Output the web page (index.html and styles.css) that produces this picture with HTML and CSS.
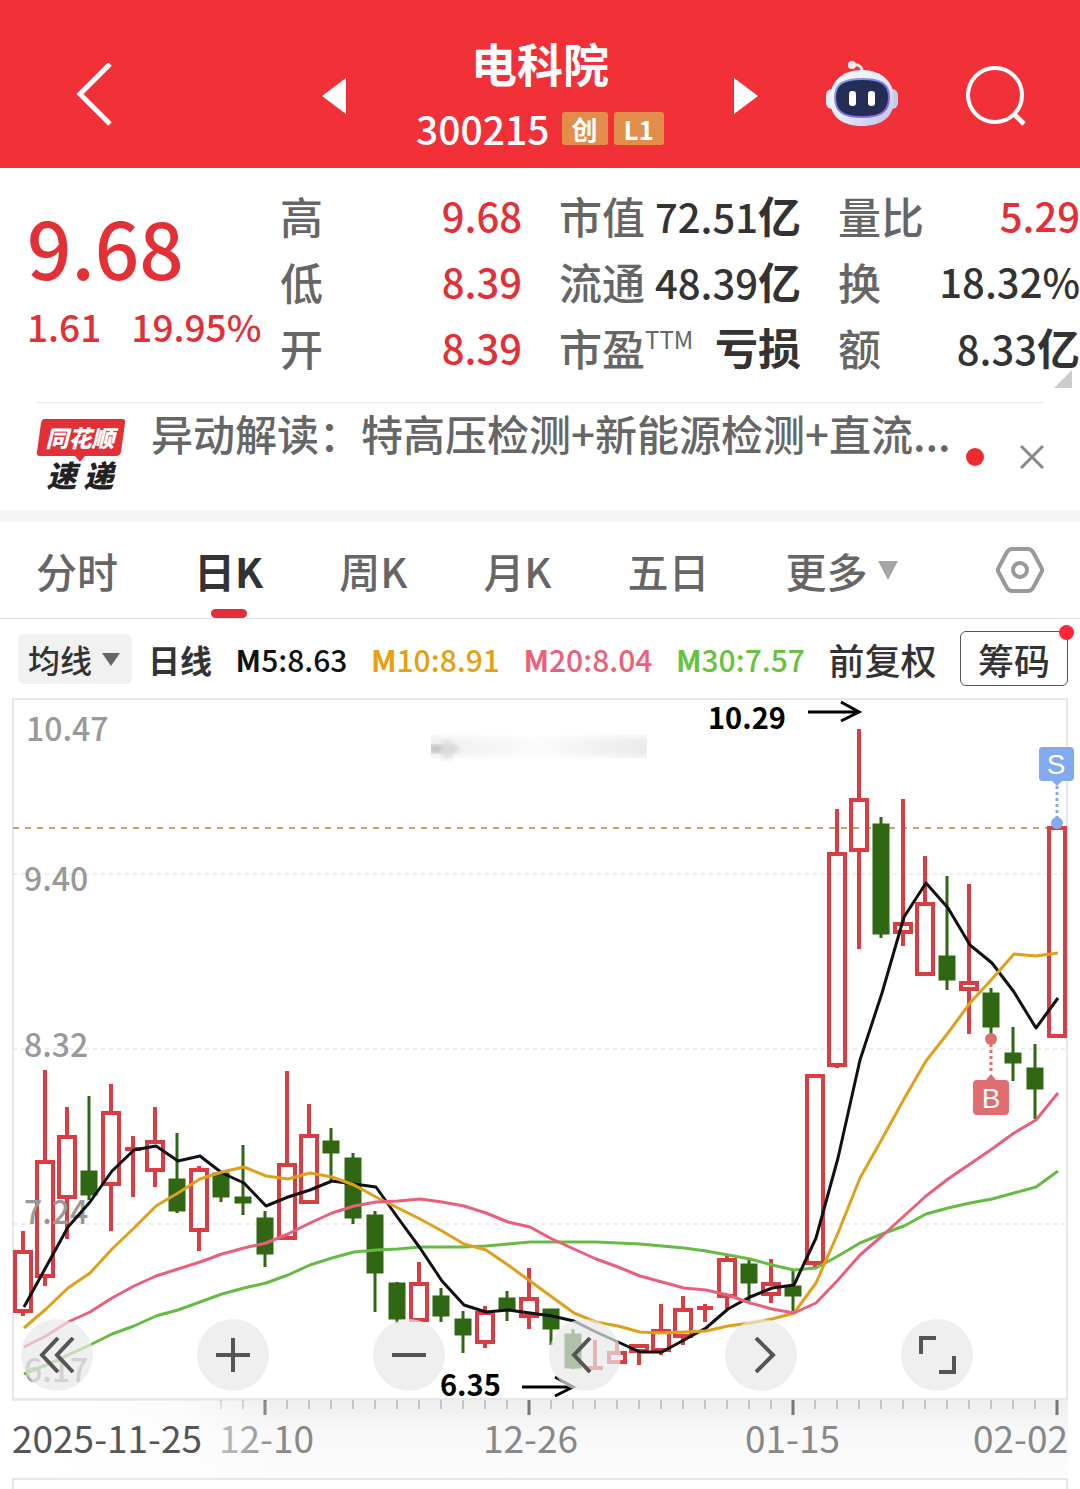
FILE: index.html
```
<!DOCTYPE html>
<html lang="zh-CN">
<head>
    <meta charset="UTF-8">
    <meta name="viewport" content="width=device-width, initial-scale=1.0">
    <title>电科院 300215</title>
    <link rel="stylesheet" href="styles.css">
</head>
<body>
    <header class="header">
        <div class="header-left">
            <button class="icon-button" aria-label="返回">
                <svg width="40" height="66" viewBox="0 0 40 66"><path d="M35 1 L5 31 L35 61" fill="none" stroke="#fff" stroke-width="5"/></svg>
            </button>
            <button class="icon-button" aria-label="上一只">
                <svg width="24" height="36" viewBox="0 0 24 36"><path d="M24 0 V36 L0 18 Z" fill="#fff"/></svg>
            </button>
        </div>
        <div class="header-title">
            <h1>电科院</h1>
            <div class="code-row">
                <span class="code">300215</span>
                <span class="tag">创</span>
                <span class="tag">L1</span>
            </div>
        </div>
        <div class="header-right">
            <button class="icon-button" aria-label="下一只">
                <svg width="24" height="36" viewBox="0 0 24 36"><path d="M0 0 V36 L24 18 Z" fill="#fff"/></svg>
            </button>
            <button class="icon-button robot" aria-label="智能助手">
                <svg width="72" height="72" viewBox="0 0 72 72">
                    <defs>
                        <linearGradient id="shell" x1="0" y1="0" x2="1" y2="1">
                            <stop offset="0" stop-color="#fff"/>
                            <stop offset="0.5" stop-color="#e9ebf8"/>
                            <stop offset="1" stop-color="#b9c0ee"/>
                        </linearGradient>
                        <linearGradient id="rim" x1="0" y1="0" x2="1" y2="1">
                            <stop offset="0" stop-color="#8fa6e8"/>
                            <stop offset="0.7" stop-color="#7d6ae6"/>
                            <stop offset="1" stop-color="#a15be8"/>
                        </linearGradient>
                    </defs>
                    <path d="M36 14 C37 7 33 4 27 5" fill="none" stroke="#f1e6f2" stroke-width="3"/>
                    <circle cx="26" cy="5" r="4" fill="#f7eef5"/>
                    <rect x="0" y="29" width="12" height="20" rx="6" fill="#e6e9fa"/>
                    <rect x="60" y="29" width="12" height="20" rx="6" fill="#c3c9f2"/>
                    <path d="M36 10 C56 10 68 22 68 39 C68 57 56 66 36 66 C16 66 4 57 4 39 C4 22 16 10 36 10 Z" fill="url(#shell)"/>
                    <path d="M36 19 C55 19 63 24 63 37 C63 51 56 57 36 57 C16 57 9 51 9 37 C9 24 17 19 36 19 Z" fill="#242d55" stroke="url(#rim)" stroke-width="2"/>
                    <rect x="23" y="31" width="7" height="15" rx="3" fill="#fff"/>
                    <rect x="42" y="31" width="7" height="15" rx="3" fill="#fff"/>
                </svg>
            </button>
            <button class="icon-button" aria-label="搜索">
                <svg width="60" height="62" viewBox="0 0 60 62"><g fill="none" stroke="#fff" stroke-width="4"><circle cx="29" cy="30" r="27"/><path d="M48 49 L58 59" stroke-width="5"/></g></svg>
            </button>
        </div>
    </header>

    <section class="quote">
        <div class="price-box">
            <div class="price">9.68</div>
            <div class="change"><span>1.61</span><span>19.95%</span></div>
        </div>
        <dl class="stats">
            <div><dt>高</dt><dd class="up">9.68</dd></div>
            <div><dt>市值</dt><dd>72.51<b>亿</b></dd></div>
            <div><dt>量比</dt><dd class="up">5.29</dd></div>
            <div><dt>低</dt><dd class="up">8.39</dd></div>
            <div><dt>流通</dt><dd>48.39<b>亿</b></dd></div>
            <div><dt>换</dt><dd>18.32%</dd></div>
            <div><dt>开</dt><dd class="up">8.39</dd></div>
            <div><dt>市盈<sup>TTM</sup></dt><dd><b>亏损</b></dd></div>
            <div><dt>额</dt><dd>8.33<b>亿</b></dd></div>
        </dl>
        <span class="corner"></span>
    </section>

    <section class="news">
        <svg class="news-logo" width="90" height="80" viewBox="0 0 90 80">
            <path d="M8 2 H86 Q90 2 89 6 L85 35 Q84 39 80 39 H49 L44 45 L39 39 H4 Q0 39 1 35 L5 6 Q6 2 8 2 Z" fill="#e33037"/>
            <text x="44" y="30" class="logo-top">同花顺</text>
            <text x="44" y="70" class="logo-bottom">速 递</text>
        </svg>
        <a class="news-text" href="#">异动解读：特高压检测+新能源检测+直流...</a>
        <span class="red-dot"></span>
        <button class="icon-button" aria-label="关闭">
            <svg width="24" height="24" viewBox="0 0 24 24"><path d="M1 1 L23 23 M23 1 L1 23" stroke="#888" stroke-width="3"/></svg>
        </button>
    </section>

    <nav class="tabs">
        <button>分时</button>
        <button class="active">日K</button>
        <button>周K</button>
        <button>月K</button>
        <button>五日</button>
        <button class="more">更多<svg width="22" height="19" viewBox="0 0 22 19"><path d="M1 0 H21 L11 19 Z" fill="#a5a5a5"/></svg></button>
        <button class="settings" aria-label="设置">
            <svg width="48" height="46" viewBox="0 0 48 46"><g fill="none" stroke="#999" stroke-width="4"><path d="M16 2 H32 Q35 2 37 5 L45 20 Q47 23 45 26 L37 41 Q35 44 32 44 H16 Q13 44 11 41 L3 26 Q1 23 3 20 L11 5 Q13 2 16 2 Z"/><circle cx="24" cy="23" r="7"/></g></svg>
        </button>
    </nav>

    <div class="ma-row">
        <div class="ma-period">
            <div class="ma-select">
                <select aria-label="指标"><option>均线</option></select>
                <svg width="18" height="13" viewBox="0 0 18 13"><path d="M0 0 H18 L9 13 Z" fill="#666"/></svg>
            </div>
            <strong>日线</strong>
        </div>
        <span class="ma m5"><b>M</b>5:8.63</span>
        <span class="ma m10"><b>M</b>10:8.91</span>
        <span class="ma m20"><b>M</b>20:8.04</span>
        <span class="ma m30"><b>M</b>30:7.57</span>
        <button class="adjust">前复权</button>
        <button class="chips">筹码<span class="chips-dot"></span></button>
    </div>

    <main class="chart">
        <svg id="kline" viewBox="0 698 1080 780">
            <defs>
                <linearGradient id="axisShade" x1="0" y1="0" x2="0" y2="1">
                    <stop offset="0" stop-color="#eeeeee"/>
                    <stop offset="0.4" stop-color="#f8f8f8"/>
                    <stop offset="1" stop-color="#fcfcfc"/>
                </linearGradient>
                <linearGradient id="axisFade">
                    <stop offset="0" stop-color="#fff"/>
                    <stop offset="0.6" stop-color="#fff" stop-opacity="0.8"/>
                    <stop offset="1" stop-color="#fff" stop-opacity="0"/>
                </linearGradient>
                <linearGradient id="smear">
                    <stop offset="0" stop-color="#eee"/>
                    <stop offset="0.2" stop-color="#f3f3f3"/>
                    <stop offset="0.5" stop-color="#fbfbfb"/>
                    <stop offset="1" stop-color="#e9e9e9"/>
                </linearGradient>
                <filter id="soft"><feGaussianBlur stdDeviation="3"/></filter>
                <clipPath id="smearBox"><rect x="431" y="725" width="216" height="40"/></clipPath>
            </defs>
            <rect x="12" y="1400" width="1056" height="78" fill="url(#axisShade)"/>
            <rect x="13" y="699" width="1054" height="700" class="frame"/>
            <g clip-path="url(#smearBox)">
                <rect x="425" y="737" width="228" height="20" fill="url(#smear)" filter="url(#soft)"/>
                <ellipse cx="438" cy="749" rx="20" ry="4" fill="#bbb" filter="url(#soft)"/>
                <ellipse cx="447" cy="750" rx="6" ry="10" fill="#ddd" filter="url(#soft)"/>
            </g>
            <path d="M13 874 H1067 M13 1049 H1067 M13 1224 H1067" class="grid-line"/>
            <path d="M13 828 H1067" class="price-line"/>
            <g id="ticks"></g>
            <g id="candles"></g>
            <g class="scale">
                <text x="26" y="741">10.47</text>
                <text x="24" y="891">9.40</text>
                <text x="24" y="1057">8.32</text>
                <text x="24" y="1224">7.24</text>
                <text x="24" y="1382">6.17</text>
            </g>
            <g id="lines"></g>
            <g class="extreme">
                <text x="708" y="729">10.29</text>
                <path d="M808 712 H858 M841 702 L859 712 L841 721"/>
                <text x="440" y="1396">6.35</text>
                <path d="M522 1387 H572 M555 1377 L573 1387 L555 1396"/>
            </g>
            <g class="marker sell">
                <path d="M1057 786 V818" class="dots"/>
                <circle cx="1057" cy="823" r="6"/>
                <path d="M1042 747 H1070 Q1074 747 1074 751 V777 Q1074 781 1070 781 H1062 L1057 786 L1052 781 H1042 Q1039 781 1039 777 V751 Q1039 747 1042 747 Z"/>
                <text x="1056" y="774">S</text>
            </g>
            <g class="marker buy">
                <path d="M991 1044 V1074" class="dots"/>
                <circle cx="991" cy="1039" r="6"/>
                <path d="M977 1080 H986 L991 1074 L996 1080 H1005 Q1009 1080 1009 1084 V1111 Q1009 1115 1005 1115 H977 Q973 1115 973 1111 V1084 Q973 1080 977 1080 Z"/>
                <text x="991" y="1108">B</text>
            </g>
            <g class="dates">
                <text x="219" y="1453">12-10</text>
                <rect x="12" y="1401" width="270" height="76" fill="url(#axisFade)"/>
                <text x="12" y="1453" class="current">2025-11-25</text>
                <text x="483" y="1453">12-26</text>
                <text x="745" y="1453">01-15</text>
                <text x="1068" y="1453" text-anchor="end">02-02</text>
            </g>
        </svg>
        <div class="chart-tools">
            <button aria-label="最早"><svg width="36" height="36" viewBox="0 0 36 36"><path d="M19 1 L3 18 L19 35 M34 1 L18 18 L34 35"/></svg></button>
            <button aria-label="放大"><svg width="36" height="36" viewBox="0 0 36 36"><path d="M18 1 V35 M1 18 H35"/></svg></button>
            <button aria-label="缩小"><svg width="36" height="36" viewBox="0 0 36 36"><path d="M1 18 H35"/></svg></button>
            <button aria-label="左移"><svg width="36" height="36" viewBox="0 0 36 36"><path d="M23 1 L7 18 L23 35"/></svg></button>
            <button aria-label="右移"><svg width="36" height="36" viewBox="0 0 36 36"><path d="M13 1 L30 18 L13 35"/></svg></button>
            <button aria-label="全屏"><svg width="38" height="38" viewBox="0 0 38 38"><path d="M3 18 V2 H18 M36 20 V36 H21"/></svg></button>
        </div>
    </main>
    <section class="sub-chart"></section>

    <script src="script.js"></script>
</body>
</html>
```
FILE: styles.css
```
* {
    box-sizing: border-box;
}

body {
    margin: 0;
    background-color: #fff;
    color: #333;
    font-family: "Noto Sans CJK SC", sans-serif;
}

button, select {
    padding: 0;
    border: none;
    background: none;
    color: inherit;
    font: inherit;
    cursor: pointer;
}

svg {
    display: block;
}

.header {
    display: grid;
    grid-template-columns: 346fr 388fr 346fr;
    align-items: center;
    height: 168px;
    padding-top: 24px;
    background-color: #f23038;
    color: #fff;
}

.header-left, .header-right {
    display: flex;
    justify-content: space-between;
    align-items: center;
}

.header-left {
    padding-left: 75px;
}

.header-right {
    padding-right: 54px;
}

.header-title {
    text-align: center;
}

.header-title h1 {
    margin: 0;
    font-size: 46px;
    line-height: 64px;
}

.code-row {
    display: flex;
    justify-content: center;
    align-items: center;
    gap: 6px;
    height: 68px;
}

.code {
    margin-right: 6px;
    font-size: 39px;
    font-weight: 500;
    line-height: 60px;
}

.tag {
    padding: 0 10px;
    border-radius: 3px;
    background-color: #e28e4a;
    font-size: 26px;
    font-weight: bold;
    line-height: 33px;
}

.quote {
    position: relative;
    display: flex;
    height: 234px;
    padding: 14px 0 0 27px;
}

.price-box {
    width: 253px;
    color: #e33037;
    font-weight: 500;
}

.price {
    padding-top: 14px;
    font-size: 78px;
    line-height: 100px;
}

.change {
    display: flex;
    gap: 30px;
    font-size: 37px;
    line-height: 60px;
}

.stats {
    flex: 1;
    display: grid;
    grid-template-columns: repeat(3, 1fr);
    grid-auto-rows: 66px;
    column-gap: 37px;
    margin: 0;
}

.stats div {
    display: flex;
    justify-content: space-between;
    align-items: center;
    white-space: nowrap;
}

.stats dt {
    display: flex;
    color: #666;
    font-size: 43px;
    font-weight: 500;
    line-height: 66px;
}

.stats sup {
    font-size: 24px;
    font-weight: 400;
    line-height: 50px;
}

.stats dd {
    margin: 0;
    font-size: 40px;
    font-weight: 500;
    line-height: 66px;
}

.stats b {
    font-size: 43px;
}

.stats .up {
    color: #e33037;
}

.corner {
    position: absolute;
    right: 8px;
    bottom: 14px;
    border-left: 18px solid transparent;
    border-bottom: 18px solid #ccc;
}

.news {
    display: flex;
    align-items: center;
    height: 108px;
    margin: 0 36px;
    border-top: 1px solid #e8e8e8;
}

.news-logo {
    flex: none;
}

.logo-top, .logo-bottom {
    font-style: italic;
    font-weight: 900;
    text-anchor: middle;
}

.logo-top {
    fill: #fff;
    font-size: 23px;
}

.logo-bottom {
    fill: #222;
    font-size: 30px;
}

.news-text {
    flex: 1;
    align-self: flex-start;
    margin-left: 25px;
    color: #666;
    font-size: 42px;
    font-weight: 500;
    line-height: 60px;
    text-decoration: none;
    white-space: nowrap;
}

.red-dot {
    width: 18px;
    height: 18px;
    margin-right: 36px;
    border-radius: 50%;
    background-color: #ee2a30;
}

.tabs {
    display: flex;
    gap: 76px;
    height: 109px;
    padding: 0 36px;
    border-top: 12px solid #f5f5f5;
    border-bottom: 1px solid #e3e3e3;
    color: #666;
    font-size: 41px;
    font-weight: 500;
}

.tabs .active {
    position: relative;
    color: #333;
    font-weight: bold;
}

.tabs .active::after {
    content: "";
    position: absolute;
    bottom: 0;
    left: 50%;
    width: 36px;
    height: 9px;
    margin-left: -18px;
    border-radius: 5px;
    background-color: #e33037;
}

.more {
    display: flex;
    align-items: center;
    gap: 9px;
}

.settings {
    margin-left: auto;
}

.ma-row {
    display: flex;
    justify-content: space-between;
    align-items: center;
    height: 79px;
    padding: 0 12px 0 18px;
    font-size: 32px;
    white-space: nowrap;
}

.ma-period {
    display: flex;
    align-items: center;
    gap: 16px;
}

.ma-select {
    position: relative;
    width: 114px;
    height: 50px;
    border-radius: 6px;
    background-color: #f1f1f1;
}

.ma-select select {
    width: 100%;
    height: 100%;
    padding-left: 10px;
    appearance: none;
    font-weight: 500;
}

.ma-select svg {
    position: absolute;
    top: 19px;
    right: 12px;
    pointer-events: none;
}

.ma {
    font-size: 30px;
    font-weight: 500;
}

.m5 {
    color: #111;
}

.m10 {
    color: #e6a010;
}

.m20 {
    color: #ee607a;
}

.m30 {
    color: #67c23f;
}

.adjust {
    font-size: 36px;
    font-weight: 500;
}

.chips {
    position: relative;
    width: 108px;
    height: 55px;
    border: 1px solid #555;
    border-radius: 6px;
    font-size: 36px;
    font-weight: 500;
    line-height: 52px;
}

.chips-dot {
    position: absolute;
    top: -7px;
    right: -7px;
    width: 15px;
    height: 15px;
    border-radius: 50%;
    background-color: #ff2538;
}

.chart {
    position: relative;
}

#kline {
    width: 100%;
    height: auto;
}

.frame {
    fill: none;
    stroke: #e8e8e8;
    stroke-width: 2;
}

.grid-line {
    stroke: #ddd;
    stroke-dasharray: 4 4;
}

.price-line {
    stroke: #c9a56b;
    stroke-width: 2;
    stroke-dasharray: 6 6;
}

.up-candle {
    fill: none;
    stroke: #d93c42;
    stroke-width: 4;
}

.down-candle {
    fill: #2f6713;
    stroke: #2f6713;
    stroke-width: 3;
}

.ma-line {
    fill: none;
    stroke-width: 3;
    stroke-linejoin: round;
}

.scale {
    fill: #999;
    font-size: 32px;
    font-weight: 500;
}

.extreme {
    font-size: 29px;
    font-weight: bold;
}

.extreme text {
    fill: #000;
}

.extreme path {
    fill: none;
    stroke: #000;
    stroke-width: 3;
}

.marker text {
    fill: #fff;
    font-family: "Liberation Sans", sans-serif;
    font-size: 28px;
    text-anchor: middle;
}

.marker .dots {
    stroke-width: 3;
    stroke-dasharray: 3 3;
}

.sell {
    fill: #82abef;
}

.sell .dots {
    stroke: #82abef;
}

.buy {
    fill: #e06e70;
}

.buy .dots {
    stroke: #e06e70;
}

.dates {
    fill: #888;
    font-size: 37px;
}

.dates .current {
    fill: #555;
}

.tick {
    stroke: #999;
    stroke-width: 1;
}

.tick-big {
    stroke: #777;
    stroke-width: 3;
}

.chart-tools {
    position: absolute;
    right: 0;
    bottom: 87px;
    left: 21px;
    display: flex;
    gap: 104px;
}

.chart-tools button {
    display: flex;
    justify-content: center;
    align-items: center;
    width: 72px;
    height: 72px;
    border-radius: 50%;
    background-color: rgba(232, 232, 232, 0.7);
}

.chart-tools path {
    fill: none;
    stroke: #555;
    stroke-width: 4;
}

.sub-chart {
    height: 11px;
    margin: 0 12px;
    border: 2px solid #e8e8e8;
    border-bottom: none;
}
```
FILE: script.js
```
const svgNS = "http://www.w3.org/2000/svg";
const startX = 23;
const step = 22;

// colour, high, body top, body bottom, low
const candles = [
    ["r", 1231, 1250, 1313, 1316], ["r", 1070, 1160, 1278, 1286], ["r", 1107, 1135, 1199, 1239],
    ["g", 1096, 1171, 1195, 1200], ["r", 1084, 1111, 1186, 1231], ["r", 1136, 1147, 1151, 1197],
    ["r", 1107, 1140, 1172, 1187], ["g", 1133, 1179, 1211, 1213], ["r", 1166, 1168, 1232, 1251],
    ["g", 1173, 1173, 1197, 1202], ["g", 1145, 1197, 1203, 1215], ["g", 1211, 1218, 1254, 1267],
    ["r", 1071, 1163, 1240, 1240], ["r", 1104, 1134, 1204, 1204], ["g", 1128, 1141, 1153, 1182],
    ["g", 1153, 1158, 1218, 1224], ["g", 1211, 1215, 1273, 1312], ["g", 1282, 1283, 1319, 1323],
    ["r", 1262, 1282, 1322, 1322], ["g", 1288, 1296, 1316, 1322], ["g", 1311, 1319, 1335, 1353],
    ["r", 1306, 1311, 1344, 1348], ["g", 1291, 1298, 1310, 1321], ["r", 1268, 1297, 1318, 1329],
    ["g", 1309, 1309, 1329, 1345], ["g", 1329, 1334, 1368, 1369], ["r", 1340, 1366, 1370, 1370],
    ["r", 1342, 1351, 1364, 1364], ["r", 1344, 1344, 1353, 1365], ["r", 1304, 1329, 1352, 1355],
    ["r", 1296, 1308, 1338, 1345], ["r", 1304, 1306, 1309, 1322], ["r", 1254, 1258, 1298, 1309],
    ["g", 1260, 1264, 1283, 1301], ["r", 1259, 1282, 1296, 1303], ["g", 1270, 1286, 1296, 1311],
    ["r", 1074, 1074, 1265, 1267], ["r", 809, 852, 1067, 1068], ["r", 729, 798, 852, 949],
    ["g", 817, 824, 934, 938], ["r", 799, 922, 934, 946], ["r", 856, 902, 976, 976],
    ["g", 876, 956, 980, 990], ["r", 884, 981, 991, 1034], ["g", 988, 993, 1027, 1034],
    ["g", 1027, 1053, 1063, 1081], ["g", 1044, 1068, 1089, 1119], ["r", 826, 826, 1038, 1038]
];

const averages = {
    "#66bb44": [1374, 1365, 1355, 1345, 1334, 1326, 1316, 1310, 1302, 1294, 1288, 1283, 1275, 1265, 1258, 1252,
        1250, 1249, 1247, 1247, 1247, 1246, 1244, 1242, 1242, 1242, 1242, 1243, 1244, 1246, 1248, 1251,
        1255, 1259, 1265, 1270, 1268, 1256, 1243, 1234, 1226, 1214, 1208, 1203, 1199, 1193, 1187, 1171],
    "#111111": [1307, 1267, 1227, 1202, 1171, 1150, 1146, 1161, 1156, 1173, 1183, 1206, 1197, 1190, 1181, 1184,
        1187, 1218, 1248, 1281, 1305, 1312, 1310, 1313, 1316, 1321, 1332, 1342, 1352, 1352, 1340, 1328,
        1309, 1297, 1288, 1285, 1238, 1158, 1060, 993, 917, 883, 908, 945, 963, 992, 1028, 998],
    "#e0a01c": [1328, 1309, 1288, 1273, 1249, 1228, 1206, 1193, 1179, 1172, 1167, 1176, 1179, 1173, 1177, 1185,
        1197, 1208, 1219, 1231, 1244, 1250, 1265, 1281, 1297, 1313, 1322, 1326, 1332, 1333, 1332, 1331,
        1326, 1323, 1319, 1313, 1283, 1233, 1178, 1139, 1099, 1061, 1033, 1003, 979, 954, 956, 953],
    "#e8607a": [1347, 1336, 1322, 1312, 1298, 1286, 1276, 1269, 1262, 1254, 1248, 1243, 1234, 1223, 1213, 1206,
        1202, 1201, 1199, 1202, 1206, 1213, 1222, 1227, 1239, 1249, 1259, 1267, 1276, 1282, 1288, 1290,
        1295, 1303, 1309, 1313, 1303, 1280, 1255, 1236, 1216, 1196, 1179, 1164, 1149, 1133, 1120, 1093]
};

const addPath = (parentId, d, className) => {
    const path = document.createElementNS(svgNS, "path");
    path.setAttribute("d", d);
    path.setAttribute("class", className);
    document.getElementById(parentId).appendChild(path);
    return path;
}

candles.forEach(([color, high, top, bottom, low], i) => {
    const x = startX + i * step;
    // the outline stays inside the body
    const half = color === "r" ? 8 : 7;
    const inset = color === "r" ? 2 : 1;
    const t = top + inset;
    const b = Math.max(bottom - inset, t);
    const d = `M${x} ${high} V${t} M${x} ${b} V${low} M${x - half} ${t} H${x + half} V${b} H${x - half} Z`;
    addPath("candles", d, color === "r" ? "up-candle" : "down-candle");
});

for (const color in averages) {
    const points = averages[color].map((y, i) => `${startX + 1 + i * step} ${y}`);
    addPath("lines", "M" + points.join(" L"), "ma-line").setAttribute("stroke", color);
}

// one tick a day, a long one above each date
for (let i = 9; i < candles.length; i++) {
    const x = startX + i * step;
    const big = (i - 11) % 12 === 0;
    addPath("ticks", `M${x} 1400 V${big ? 1415 : 1409}`, big ? "tick-big" : "tick");
}
```
